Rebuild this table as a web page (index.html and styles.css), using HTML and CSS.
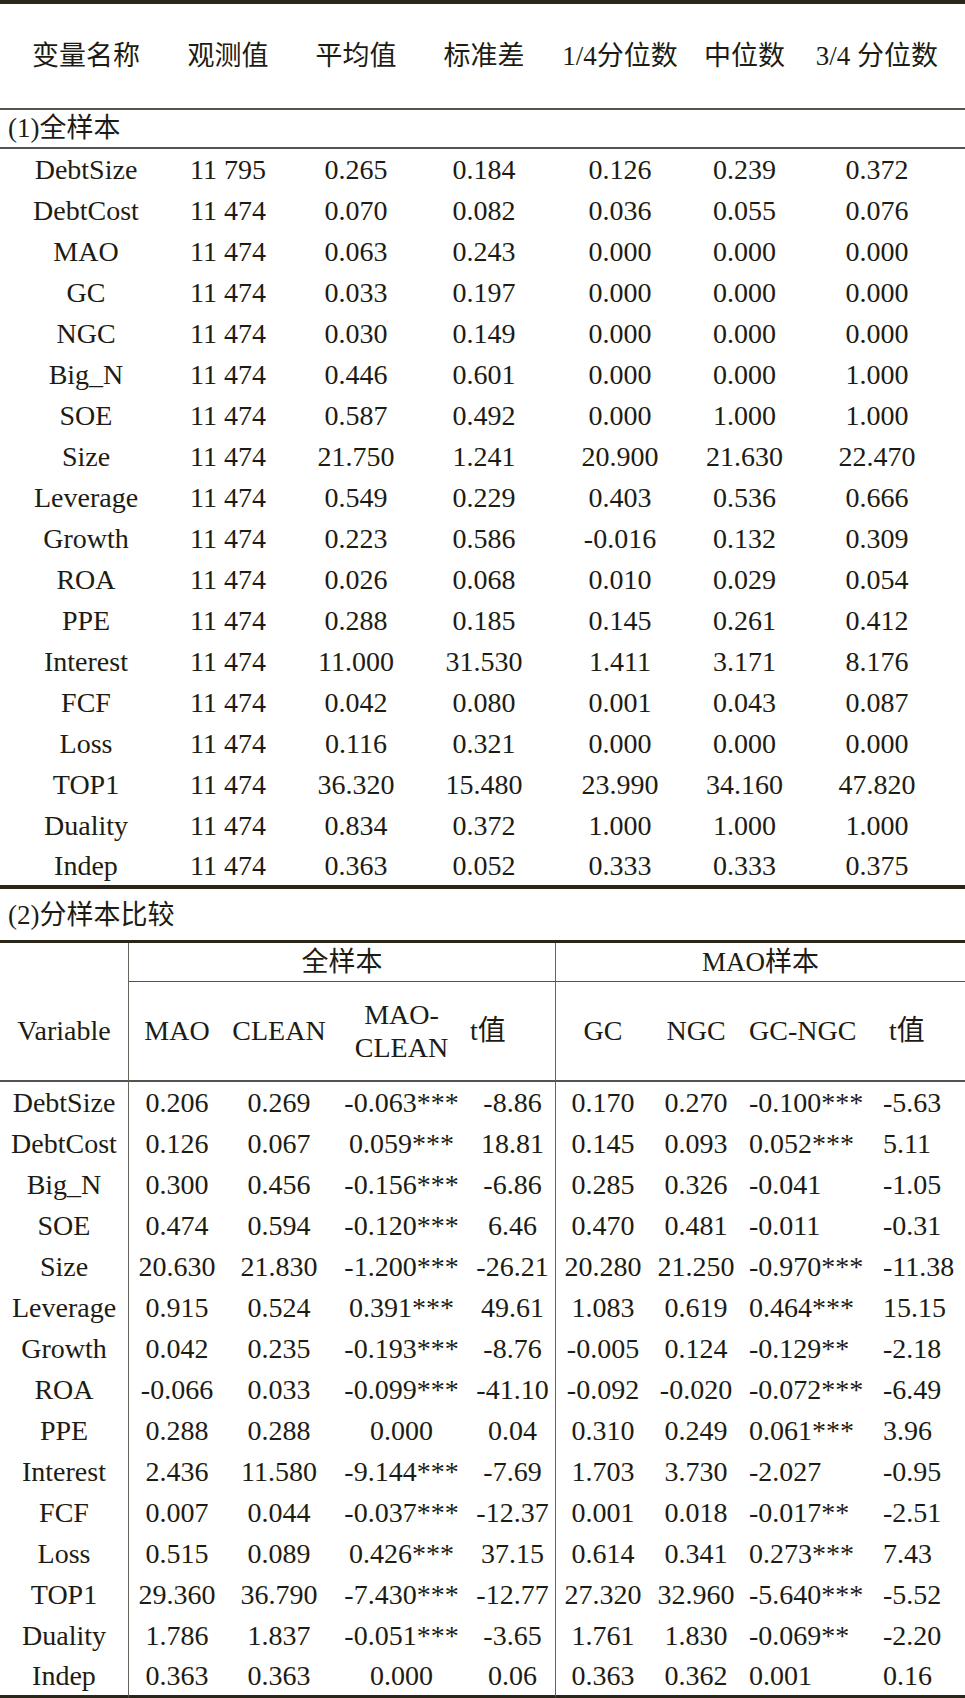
FILE: index.html
```html
<!DOCTYPE html>
<html>
<head>
<meta charset="utf-8">
<title>描述性统计</title>
<link rel="stylesheet" href="styles.css">
</head>
<body>
<div class="page">
  <table class="t1">
    <colgroup>
      <col class="w172"><col class="w112"><col class="w144"><col class="w112"><col class="w160"><col class="w89"><col class="w176">
    </colgroup>
    <thead>
      <tr class="head1">
        <th>变量名称</th><th>观测值</th><th>平均值</th><th>标准差</th><th>1/4分位数</th><th>中位数</th><th>3/4 分位数</th>
      </tr>
    </thead>
    <tbody>
      <tr class="section"><td colspan="7">(1)全样本</td></tr>
      <tr class="row first"><td>DebtSize</td><td>11 795</td><td>0.265</td><td>0.184</td><td>0.126</td><td>0.239</td><td>0.372</td></tr>
      <tr class="row"><td>DebtCost</td><td>11 474</td><td>0.070</td><td>0.082</td><td>0.036</td><td>0.055</td><td>0.076</td></tr>
      <tr class="row"><td>MAO</td><td>11 474</td><td>0.063</td><td>0.243</td><td>0.000</td><td>0.000</td><td>0.000</td></tr>
      <tr class="row"><td>GC</td><td>11 474</td><td>0.033</td><td>0.197</td><td>0.000</td><td>0.000</td><td>0.000</td></tr>
      <tr class="row"><td>NGC</td><td>11 474</td><td>0.030</td><td>0.149</td><td>0.000</td><td>0.000</td><td>0.000</td></tr>
      <tr class="row"><td>Big_N</td><td>11 474</td><td>0.446</td><td>0.601</td><td>0.000</td><td>0.000</td><td>1.000</td></tr>
      <tr class="row"><td>SOE</td><td>11 474</td><td>0.587</td><td>0.492</td><td>0.000</td><td>1.000</td><td>1.000</td></tr>
      <tr class="row"><td>Size</td><td>11 474</td><td>21.750</td><td>1.241</td><td>20.900</td><td>21.630</td><td>22.470</td></tr>
      <tr class="row"><td>Leverage</td><td>11 474</td><td>0.549</td><td>0.229</td><td>0.403</td><td>0.536</td><td>0.666</td></tr>
      <tr class="row"><td>Growth</td><td>11 474</td><td>0.223</td><td>0.586</td><td>-0.016</td><td>0.132</td><td>0.309</td></tr>
      <tr class="row"><td>ROA</td><td>11 474</td><td>0.026</td><td>0.068</td><td>0.010</td><td>0.029</td><td>0.054</td></tr>
      <tr class="row"><td>PPE</td><td>11 474</td><td>0.288</td><td>0.185</td><td>0.145</td><td>0.261</td><td>0.412</td></tr>
      <tr class="row"><td>Interest</td><td>11 474</td><td>11.000</td><td>31.530</td><td>1.411</td><td>3.171</td><td>8.176</td></tr>
      <tr class="row"><td>FCF</td><td>11 474</td><td>0.042</td><td>0.080</td><td>0.001</td><td>0.043</td><td>0.087</td></tr>
      <tr class="row"><td>Loss</td><td>11 474</td><td>0.116</td><td>0.321</td><td>0.000</td><td>0.000</td><td>0.000</td></tr>
      <tr class="row"><td>TOP1</td><td>11 474</td><td>36.320</td><td>15.480</td><td>23.990</td><td>34.160</td><td>47.820</td></tr>
      <tr class="row"><td>Duality</td><td>11 474</td><td>0.834</td><td>0.372</td><td>1.000</td><td>1.000</td><td>1.000</td></tr>
      <tr class="row last"><td>Indep</td><td>11 474</td><td>0.363</td><td>0.052</td><td>0.333</td><td>0.333</td><td>0.375</td></tr>
      <tr class="section section2"><td colspan="7">(2)分样本比较</td></tr>
    </tbody>
  </table>

  <table class="t2">
    <colgroup>
      <col class="w129"><col class="w96"><col class="w108"><col class="w137"><col class="w86"><col class="w94"><col class="w92"><col class="w138"><col class="w85">
    </colgroup>
    <thead>
      <tr class="group">
        <th class="vl"></th>
        <th colspan="4" class="vr gline">全样本</th>
        <th colspan="4" class="gline">MAO样本</th>
      </tr>
      <tr class="head2">
        <th class="vl">Variable</th>
        <th>MAO</th><th>CLEAN</th><th class="two">MAO-<br>CLEAN</th><th class="vr tleft">t值</th>
        <th>GC</th><th>NGC</th><th class="lft">GC-NGC</th><th class="lft2 th2">t值</th>
      </tr>
    </thead>
    <tbody>
      <tr class="row"><td class="vl">DebtSize</td><td>0.206</td><td>0.269</td><td>-0.063***</td><td class="vr">-8.86</td><td>0.170</td><td>0.270</td><td class="lft">-0.100***</td><td class="lft2">-5.63</td></tr>
      <tr class="row"><td class="vl">DebtCost</td><td>0.126</td><td>0.067</td><td>0.059***</td><td class="vr">18.81</td><td>0.145</td><td>0.093</td><td class="lft">0.052***</td><td class="lft2">5.11</td></tr>
      <tr class="row"><td class="vl">Big_N</td><td>0.300</td><td>0.456</td><td>-0.156***</td><td class="vr">-6.86</td><td>0.285</td><td>0.326</td><td class="lft">-0.041</td><td class="lft2">-1.05</td></tr>
      <tr class="row"><td class="vl">SOE</td><td>0.474</td><td>0.594</td><td>-0.120***</td><td class="vr">6.46</td><td>0.470</td><td>0.481</td><td class="lft">-0.011</td><td class="lft2">-0.31</td></tr>
      <tr class="row"><td class="vl">Size</td><td>20.630</td><td>21.830</td><td>-1.200***</td><td class="vr">-26.21</td><td>20.280</td><td>21.250</td><td class="lft">-0.970***</td><td class="lft2">-11.38</td></tr>
      <tr class="row"><td class="vl">Leverage</td><td>0.915</td><td>0.524</td><td>0.391***</td><td class="vr">49.61</td><td>1.083</td><td>0.619</td><td class="lft">0.464***</td><td class="lft2">15.15</td></tr>
      <tr class="row"><td class="vl">Growth</td><td>0.042</td><td>0.235</td><td>-0.193***</td><td class="vr">-8.76</td><td>-0.005</td><td>0.124</td><td class="lft">-0.129**</td><td class="lft2">-2.18</td></tr>
      <tr class="row"><td class="vl">ROA</td><td>-0.066</td><td>0.033</td><td>-0.099***</td><td class="vr">-41.10</td><td>-0.092</td><td>-0.020</td><td class="lft">-0.072***</td><td class="lft2">-6.49</td></tr>
      <tr class="row"><td class="vl">PPE</td><td>0.288</td><td>0.288</td><td>0.000</td><td class="vr">0.04</td><td>0.310</td><td>0.249</td><td class="lft">0.061***</td><td class="lft2">3.96</td></tr>
      <tr class="row"><td class="vl">Interest</td><td>2.436</td><td>11.580</td><td>-9.144***</td><td class="vr">-7.69</td><td>1.703</td><td>3.730</td><td class="lft">-2.027</td><td class="lft2">-0.95</td></tr>
      <tr class="row"><td class="vl">FCF</td><td>0.007</td><td>0.044</td><td>-0.037***</td><td class="vr">-12.37</td><td>0.001</td><td>0.018</td><td class="lft">-0.017**</td><td class="lft2">-2.51</td></tr>
      <tr class="row"><td class="vl">Loss</td><td>0.515</td><td>0.089</td><td>0.426***</td><td class="vr">37.15</td><td>0.614</td><td>0.341</td><td class="lft">0.273***</td><td class="lft2">7.43</td></tr>
      <tr class="row"><td class="vl">TOP1</td><td>29.360</td><td>36.790</td><td>-7.430***</td><td class="vr">-12.77</td><td>27.320</td><td>32.960</td><td class="lft">-5.640***</td><td class="lft2">-5.52</td></tr>
      <tr class="row"><td class="vl">Duality</td><td>1.786</td><td>1.837</td><td>-0.051***</td><td class="vr">-3.65</td><td>1.761</td><td>1.830</td><td class="lft">-0.069**</td><td class="lft2">-2.20</td></tr>
      <tr class="row last"><td class="vl">Indep</td><td>0.363</td><td>0.363</td><td>0.000</td><td class="vr">0.06</td><td>0.363</td><td>0.362</td><td class="lft">0.001</td><td class="lft2">0.16</td></tr>
    </tbody>
  </table>
</div>
</body>
</html>
```

FILE: styles.css
```css
* { box-sizing: border-box; }
html, body {
  margin: 0;
  padding: 0;
  background: #ffffff;
  overflow: hidden;
}
.page {
  width: 965px;
  font-family: "Liberation Serif", "Noto Sans CJK SC", serif;
  font-size: 28px;
  color: #1d1c14;
}
table {
  width: 965px;
  border-collapse: separate;
  border-spacing: 0;
  table-layout: fixed;
  font-family: "Liberation Serif", "Noto Sans CJK SC", serif;
}
th, td {
  padding: 0;
  font-weight: normal;
  text-align: center;
  vertical-align: middle;
  white-space: nowrap;
  line-height: 1;
}
.w172 { width: 172px; } .w112 { width: 112px; } .w144 { width: 144px; }
.w160 { width: 160px; } .w89 { width: 89px; } .w176 { width: 176px; }
.w129 { width: 129px; } .w96 { width: 96px; } .w108 { width: 108px; }
.w137 { width: 137px; } .w86 { width: 86px; } .w94 { width: 94px; }
.w92 { width: 92px; } .w138 { width: 138px; } .w85 { width: 85px; }

/* table 1 */
.head1 th {
  height: 110px;
  border-top: 4px solid #2a2619;
  border-bottom: 2px solid #55534c;
  font-size: 27px;
}
.section td {
  height: 39px;
  text-align: left;
  padding-left: 8px;
  font-size: 27px;
  border-bottom: 2px solid #55534c;
}
.section2 td {
  height: 54px;
  border-bottom: 3px solid #2a2619;
  padding-top: 2px;
}
.row td { height: 41px; }
.t1 .row.last td { border-bottom: 4px solid #2a2619; height: 43px; }

/* table 2 */
.group th {
  height: 39px;
  font-size: 27px;
}
.gline { border-bottom: 1.5px solid #55534c; }
.head2 th {
  height: 100px;
  border-bottom: 2px solid #55534c;
}
.two { line-height: 33px; }
.vl { border-right: 1.5px solid #66645c; }
.vr { border-right: 1.5px solid #66645c; }
.tleft { padding-right: 50px; }
.lft { text-align: left; padding-left: 7px; }
.lft2 { text-align: left; padding-left: 3px; }
.th2 { padding-left: 9px; }
.t2 .row td { height: 41px; }
.t2 .row.last td { border-bottom: 4px solid #2a2619; height: 43px; }
```
